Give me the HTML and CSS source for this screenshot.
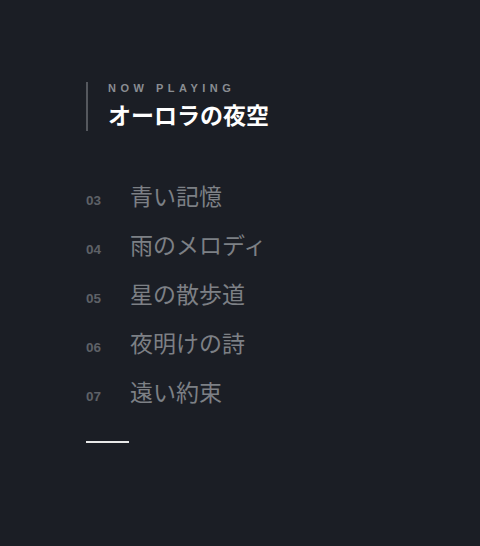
FILE: index.html
```html
<!DOCTYPE html>
<html lang="ja">
<head>
  <meta charset="UTF-8" />
  <meta name="viewport" content="width=device-width, initial-scale=1.0"/>
  <title>Now Playing</title>
  <link rel="stylesheet" href="styles.css">
</head>
<body>

  <div class="player">
    <!-- Current track -->
    <div class="now">
      <div class="now-label">NOW PLAYING</div>
      <div class="now-title">オーロラの夜空</div>
    </div>

    <!-- Up next -->
    <ol class="queue">
      <li><span class="num">03</span><span class="name">青い記憶</span></li>
      <li><span class="num">04</span><span class="name">雨のメロディ</span></li>
      <li><span class="num">05</span><span class="name">星の散歩道</span></li>
      <li><span class="num">06</span><span class="name">夜明けの詩</span></li>
      <li><span class="num">07</span><span class="name">遠い約束</span></li>
    </ol>

    <div class="rule"></div>
  </div>

</body>
</html>
```

FILE: styles.css
```css
/* Reset & Base */
* { margin:0; padding:0; box-sizing:border-box; }
html, body { height:100%; }
body {
  font-family:'Liberation Sans','Noto Sans CJK JP',sans-serif;
  background:#1b1e25;
}

.player {
  padding:82px 0 0 86px;
}

/* Now playing */
.now {
  border-left:2px solid #55585e;
  padding-left:20px;
  height:49px;
}
.now-label {
  font-size:11px;
  font-weight:700;
  letter-spacing:4.5px;
  color:#8a8d92;
  line-height:12px;
}
.now-title {
  margin-top:8px;
  font-size:23px;
  font-weight:700;
  color:#fff;
  line-height:28px;
}

/* Queue */
.queue {
  list-style:none;
  margin-top:50px;
  display:flex; flex-direction:column; gap:17px;
}
.queue li {
  display:flex; align-items:baseline;
  height:32px;
}
.num {
  width:44px;
  font-size:13.5px;
  font-weight:700;
  color:#5e6167;
}
.name {
  font-size:23px;
  line-height:32px;
  color:#7d8085;
}

.rule {
  margin-top:32px;
  width:43px; height:2px;
  background:#e8e8e8;
}
```
